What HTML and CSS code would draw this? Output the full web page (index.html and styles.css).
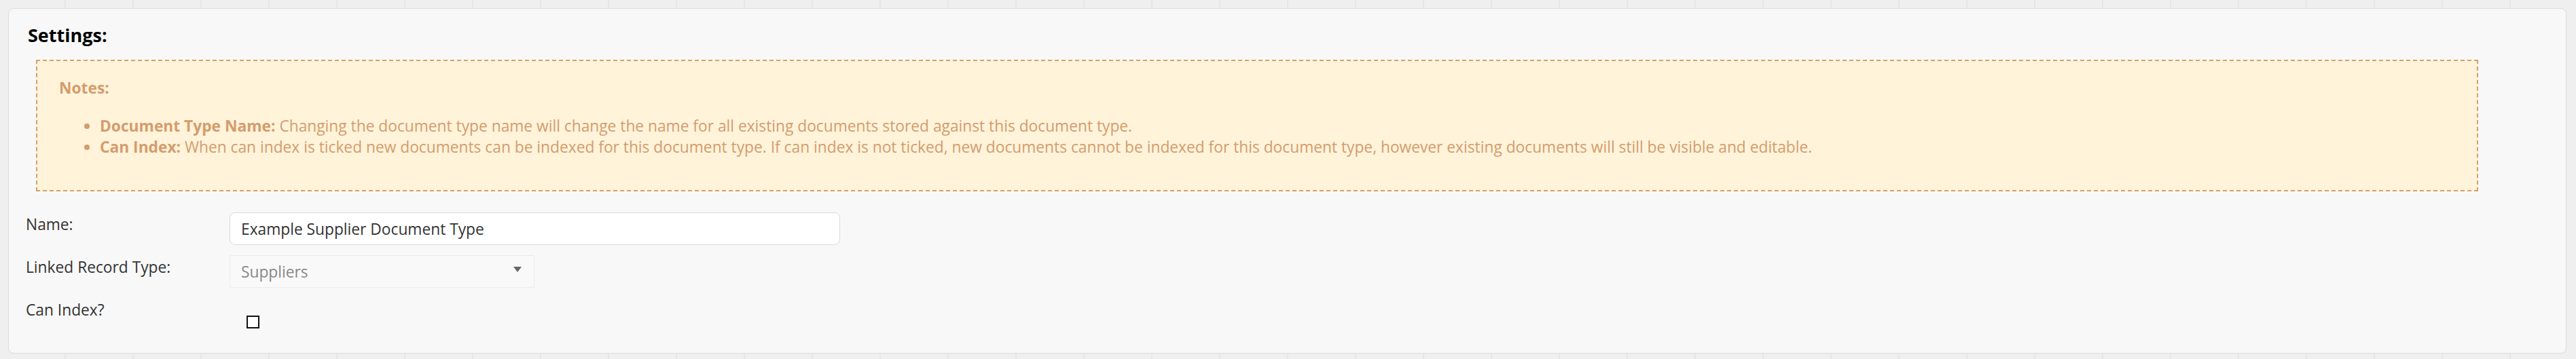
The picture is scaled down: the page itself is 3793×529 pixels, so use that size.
FILE: index.html
```html
<!DOCTYPE html>
<html lang="en">
  <head>
    <meta charset="UTF-8" />
    <meta name="viewport" content="width=device-width, initial-scale=1.0" />
    <title>Document Type Settings</title>
    <link rel="stylesheet" href="styles.css">
  </head>
  <body>
    <div class="settings-panel">
      <h3 class="panel-title">Settings:</h3>

      <div class="notes-box">
        <p class="notes-title">Notes:</p>
        <ul class="notes-list">
          <li><strong>Document Type Name:</strong> Changing the document type name will change the name for all existing documents stored against this document type.</li>
          <li><strong>Can Index:</strong> When can index is ticked new documents can be indexed for this document type. If can index is not ticked, new documents cannot be indexed for this document type, however existing documents will still be visible and editable.</li>
        </ul>
      </div>

      <form class="settings-form">
        <label class="field-label" for="docName">Name:</label>
        <div class="field">
          <input id="docName" class="text-input" type="text" value="Example Supplier Document Type">
        </div>

        <label class="field-label">Linked Record Type:</label>
        <div class="field">
          <div class="select-box">
            <span class="select-value">Suppliers</span>
            <span class="select-arrow"></span>
          </div>
        </div>

        <label class="field-label" for="canIndex">Can Index?</label>
        <div class="field">
          <input id="canIndex" class="check-input" type="checkbox">
        </div>
      </form>
    </div>
  </body>
</html>
```

FILE: styles.css
```css
* {
  box-sizing: border-box;
}

body {
  margin: 0;
  padding: 12px 14px 9px 12px;
  font-family: "Open Sans", "Noto Sans", sans-serif;
  font-size: 22.75px;
  line-height: 31px;
  color: #333;
  background-color: #efefef;
  background-image: repeating-linear-gradient(90deg, transparent 0, transparent 95px, #e6e6e6 95px, #e6e6e6 97px, transparent 97px, transparent 100px);
}

.settings-panel {
  background-color: #f8f8f8;
  border: 1px solid #dcdcdc;
  border-radius: 8px;
  padding: 23px 29px 36px 25px;
}

.panel-title {
  margin: 0 0 21px 3px;
  font-size: 27px;
  line-height: 31px;
  font-weight: 700;
  color: #000;
}

/* dashed callout with the field notes */
.notes-box {
  margin: 0 100px 31px 15px;
  padding: 24px 32px;
  background-color: #fff3da;
  border: 2px dashed #d6a06c;
  color: #d49c6c;
}

.notes-title {
  margin: 0 0 25px;
  font-weight: 700;
}

.notes-list {
  margin: 0 0 24px;
  padding-left: 60px;
}

.notes-list strong {
  font-weight: 700;
}

/* label column + control column */
.settings-form {
  display: grid;
  grid-template-columns: 300px 1fr;
  row-gap: 15px;
}

.field-label {
  padding-top: 2px;
  color: #333;
}

.text-input {
  display: block;
  width: 899px;
  height: 48px;
  padding: 0 16px;
  font-family: inherit;
  font-size: 22.75px;
  color: #333;
  background-color: #fff;
  border: 1px solid #dadada;
  border-radius: 8px;
  outline: none;
}

.select-box {
  display: flex;
  align-items: center;
  justify-content: space-between;
  width: 449px;
  height: 48px;
  padding: 0 18px 0 16px;
  background-color: #f9f9f9;
  border: 1px solid #ebebeb;
  border-radius: 2px;
}

.select-value {
  color: #888;
}

.select-arrow {
  width: 0;
  height: 0;
  margin-top: -6px;
  border-left: 6px solid transparent;
  border-right: 6px solid transparent;
  border-top: 8px solid #666;
}

.check-input {
  appearance: none;
  display: block;
  width: 19px;
  height: 19px;
  margin: 26px 0 0 25px;
  background-color: #fff;
  border: 2px solid #111;
  border-radius: 0;
}
```
